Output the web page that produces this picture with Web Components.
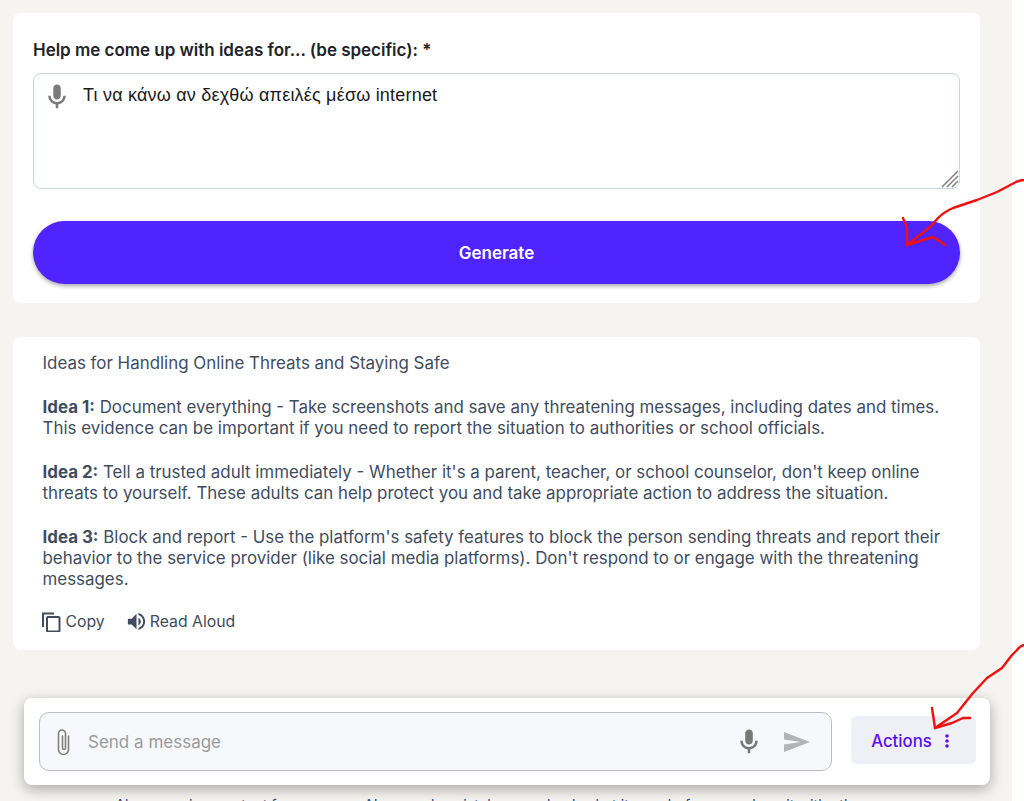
<!DOCTYPE html>
<html lang="en">
<head>
<meta charset="utf-8">
<title>Idea generator</title>
<style>
  html, body { margin: 0; height: 801px; overflow: hidden; background: #fff; }
  body { font-family: Inter, "Noto Sans", sans-serif; }
</style>
</head>
<body>
<app-page>
  <prompt-card></prompt-card>
  <result-card>
    <p>Ideas for Handling Online Threats and Staying Safe</p>
    <p><b>Idea 1:</b> Document everything - Take screenshots and save any threatening messages, including dates and times. This evidence can be important if you need to report the situation to authorities or school officials.</p>
    <p><b>Idea 2:</b> Tell a trusted adult immediately - Whether it's a parent, teacher, or school counselor, don't keep online threats to yourself. These adults can help protect you and take appropriate action to address the situation.</p>
    <p><b>Idea 3:</b> Block and report - Use the platform's safety features to block the person sending threats and report their behavior to the service provider (like social media platforms). Don't respond to or engage with the threatening messages.</p>
  </result-card>
  <chat-composer></chat-composer>
  <foot-note>Always review content for accuracy. AI can make mistakes, so check what it says before you share it with others.</foot-note>
</app-page>
<red-marks></red-marks>

<script>
const MIC = `<svg viewBox="0 0 24 24" width="100%" height="100%" fill="currentColor"><path d="M12 14c1.66 0 3-1.34 3-3V5c0-1.66-1.34-3-3-3S9 3.34 9 5v6c0 1.66 1.34 3 3 3z"/><path d="M17 11c0 2.76-2.24 5-5 5s-5-2.24-5-5H5c0 3.53 2.61 6.43 6 6.92V21h2v-3.08c3.39-.49 6-3.39 6-6.92h-2z"/></svg>`;

class AppPage extends HTMLElement {
  constructor() {
    super();
    this.attachShadow({ mode: 'open' });
    this.shadowRoot.innerHTML = `
      <style>
        :host { display: block; width: 1012px; height: 801px; overflow: hidden; box-sizing: border-box;
                background: #f5f4f0; padding-top: 13px; }
      </style>
      <slot></slot>`;
  }
}

class PromptCard extends HTMLElement {
  constructor() {
    super();
    this.attachShadow({ mode: 'open' });
    this.shadowRoot.innerHTML = `
      <style>
        :host { display: block; box-sizing: border-box; width: 967px; height: 290px; margin-left: 13px;
                background: #fff; border-radius: 8px; padding: 28px 20px 0; }
        label { display: block; font: 600 17px/19px Inter, sans-serif; color: #1f2328; letter-spacing: -0.02px; }
        .box { position: relative; box-sizing: border-box; height: 116px; margin-top: 13px; display: flex; gap: 11px;
               padding: 8px 8px; border: 1px solid #c5d2e8; border-radius: 8px; }
        .mic { width: 30px; height: 30px; color: #7b7b7b; flex: none; }
        .text { font: 18px/26px "Liberation Sans", Arial, sans-serif; color: #1a1a1a; letter-spacing: .2px; }
        .grip { position: absolute; right: 0; bottom: 0; width: 18px; height: 18px; }
        button { display: block; width: 100%; height: 63px; margin-top: 32px; border: 0; border-radius: 32px;
                 background: #4f24ff; color: #fff; font: 600 17px Inter, sans-serif;
                 box-shadow: 0 2px 4px rgba(0,0,0,.35); }
      </style>
      <label>Help me come up with ideas for... (be specific): *</label>
      <div class="box">
        <span class="mic">${MIC}</span>
        <span class="text">Τι να κάνω αν δεχθώ απειλές μέσω internet</span>
        <svg class="grip" viewBox="0 0 18 18" stroke="#808080" stroke-width="1.5"><path d="M1 17 17 1M6 17 17 6M11 17l6-6"/></svg>
      </div>
      <button>Generate</button>`;
  }
}

class ResultCard extends HTMLElement {
  constructor() {
    super();
    this.attachShadow({ mode: 'open' });
    this.shadowRoot.innerHTML = `
      <style>
        :host { display: block; box-sizing: border-box; width: 967px; height: 313px; margin: 34px 0 0 13px;
                background: #fff; border-radius: 8px; padding: 16px 30px 0 29.5px; color: #414c5e;
                font: 16.91px/21px Inter, sans-serif; }
        ::slotted(p) { margin: 0 0 23px; }
        .tools { display: flex; align-items: center; gap: 21px; margin: -3px 0 0 -2px; font-size: 15.8px; }
        .tool { display: flex; align-items: center; gap: 5px; }
        .tool + .tool { gap: 2px; margin-left: -1px; }
        svg { display: block; }
      </style>
      <slot></slot>
      <div class="tools">
        <span class="tool">
          <svg width="20" height="20" viewBox="0 0 20 20" fill="none" stroke="#414c5e" stroke-width="2"><path d="M2 15V1.5h11"/><rect x="6" y="5" width="12.5" height="14.5" rx="1"/></svg>
          Copy
        </span>
        <span class="tool">
          <svg width="23" height="23" viewBox="0 0 24 24" fill="#414c5e"><path d="M3 9v6h4l5 5V4L7 9H3z"/><path d="M16.5 12c0-1.77-1.02-3.29-2.5-4.03v8.05c1.48-.73 2.5-2.25 2.5-4.02z"/><path d="M14 3.23v2.06c2.89.86 5 3.54 5 6.71s-2.11 5.85-5 6.71v2.06c4.01-.91 7-4.49 7-8.77s-2.99-7.86-7-8.77z"/></svg>
          Read Aloud
        </span>
      </div>`;
  }
}

class ChatComposer extends HTMLElement {
  constructor() {
    super();
    this.attachShadow({ mode: 'open' });
    this.shadowRoot.innerHTML = `
      <style>
        :host { display: flex; align-items: center; box-sizing: border-box; width: 966px; height: 87px; margin: 48px 0 0 24px;
                padding: 0 14px 0 15px; background: #fff; border-radius: 8px;
                box-shadow: 0 4px 14px rgba(0,0,0,.32); }
        .input { flex: none; box-sizing: border-box; width: 793px; height: 59px; display: flex; align-items: center;
                 background: #f6f8fb; border: 1px solid #bdbdbd; border-radius: 10px; padding: 0 20px 0 11px; color: #9b9b9b;
                 font: 17px Inter, sans-serif; }
        .clip { width: 26px; height: 30px; flex: none; margin-right: 11px; }
        .ph { flex: 1; }
        .mic { width: 30px; height: 30px; color: #777; flex: none; margin-right: 19px; }
        .send { width: 28px; height: 24px; flex: none; }
        button { margin: 0 0 4px auto; box-sizing: border-box; width: 125px; height: 48px; border: 0; border-radius: 6px; background: #eef0f6;
                 color: #5b0df5; font: 500 16.8px Inter, sans-serif; display: flex; align-items: center; justify-content: center; gap: 13px; padding: 2px 7px 0 0; }
        .dots { width: 4px; height: 14px; }
      </style>
      <div class="input">
        <svg class="clip" viewBox="0 0 26 30" fill="none" stroke="#857f78" stroke-width="1.6" stroke-linecap="round"><path d="M17.5 9v13.5a5 5 0 0 1-10 0V6.5a3.5 3.5 0 0 1 7 0V21a1.5 1.5 0 0 1-3 0V9"/></svg>
        <span class="ph">Send a message</span>
        <span class="mic">${MIC}</span>
        <svg class="send" viewBox="0 0 28 24" fill="#b4b4b4"><path d="M1 2l26 10L1 22v-7.5L18 12 1 9.5z"/></svg>
      </div>
      <button>Actions
        <svg class="dots" viewBox="0 0 4 14" fill="#5b0df5"><circle cx="2" cy="2" r="1.8"/><circle cx="2" cy="7" r="1.8"/><circle cx="2" cy="12" r="1.8"/></svg>
      </button>`;
  }
}

class FootNote extends HTMLElement {
  constructor() {
    super();
    this.attachShadow({ mode: 'open' });
    this.shadowRoot.innerHTML = `
      <style>
        :host { display: block; width: 967px; margin: 11px 0 0 13px; text-align: center;
                font: 14.3px/18px Inter, sans-serif; color: #2f4a7a; white-space: nowrap; }
      </style>
      <slot></slot>`;
  }
}

// hand drawn annotations over the page
class RedMarks extends HTMLElement {
  constructor() {
    super();
    this.attachShadow({ mode: 'open' });
    this.shadowRoot.innerHTML = `
      <style>
        :host { position: absolute; left: 0; top: 0; width: 1024px; height: 801px; pointer-events: none; }
        svg { display: block; }
      </style>
      <svg width="1024" height="801" fill="none" stroke="#f01010" stroke-width="2.4" stroke-linecap="round" stroke-linejoin="round">
        <path d="M1024 180q-4 0-8 2L997 192 977 200 953 208q-9 4-15 10l-8 9-23 18"/>
        <path d="M903 218l4 10 0 17 13-4 13-4 12 8"/>
        <path d="M1024 645q-4 1-7 5l-5 5-10 13-15 10-14 15-16 20-22 15"/>
        <path d="M932 708l3 20 17-5 11-5 7 0"/>
      </svg>`;
  }
}

customElements.define('app-page', AppPage);
customElements.define('prompt-card', PromptCard);
customElements.define('result-card', ResultCard);
customElements.define('chat-composer', ChatComposer);
customElements.define('foot-note', FootNote);
customElements.define('red-marks', RedMarks);
</script>
</body>
</html>
